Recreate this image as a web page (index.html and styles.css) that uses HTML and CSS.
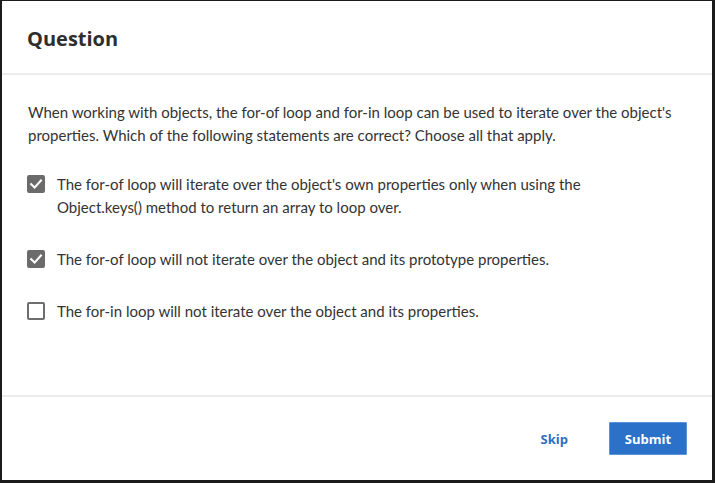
FILE: index.html
```html
<!DOCTYPE html>
<html>
<head>
<meta charset="utf-8">
<link rel="stylesheet" href="styles.css">
</head>
<body>
<div class="screen">
  <div class="dialog">
    <div class="header"><h1 class="title">Question</h1></div>
    <div class="body">
      <p class="prompt">When working with objects, the for-of loop and for-in loop can be used to iterate over the object's properties. Which of the following statements are correct? Choose all that apply.</p>
      <div class="options">
        <label class="option">
          <span class="box checked"><svg viewBox="0 0 18 18" width="18" height="18"><path d="M4.2 9.3 L7.6 12.6 L13.9 5.6" fill="none" stroke="#fff" stroke-width="2.1" stroke-linecap="square"/></svg></span>
          <span class="text">The for-of loop will iterate over the object's own properties only when using the Object.keys() method to return an array to loop over.</span>
        </label>
        <label class="option">
          <span class="box checked"><svg viewBox="0 0 18 18" width="18" height="18"><path d="M4.2 9.3 L7.6 12.6 L13.9 5.6" fill="none" stroke="#fff" stroke-width="2.1" stroke-linecap="square"/></svg></span>
          <span class="text">The for-of loop will not iterate over the object and its prototype properties.</span>
        </label>
        <label class="option">
          <span class="box"></span>
          <span class="text">The for-in loop will not iterate over the object and its properties.</span>
        </label>
      </div>
    </div>
    <div class="footer">
      <button class="skip">Skip</button>
      <button class="submit">Submit</button>
    </div>
  </div>
</div>
</body>
</html>
```
FILE: styles.css
```css
html, body {
  margin: 0;
  padding: 0;
  height: 100%;
}
body {
  background: #1b1b1b;
  font-family: "Lato", "Open Sans", sans-serif;
  color: #333;
}
.screen {
  height: 100vh;
  box-sizing: border-box;
  padding: 1px 3px 3px 2px;
  display: flex;
}
.dialog {
  flex: 1;
  background: #fff;
  display: flex;
  flex-direction: column;
}
.header {
  height: 72px;
  border-bottom: 2px solid #ececec;
  display: flex;
  align-items: center;
  padding: 0 26px;
}
.title {
  margin: 0;
  font-family: "Open Sans", sans-serif;
  font-weight: 700;
  font-size: 20px;
  color: #2e2e2e;
  padding-top: 2px;
  margin-left: -1px;
}
.body {
  flex: 1;
  padding: 26px 26px 0 26px;
  border-bottom: 2px solid #ececec;
}
.prompt {
  margin: 0 0 26px 0;
  font-size: 15px;
  line-height: 23px;
}
.options {
  display: flex;
  flex-direction: column;
  gap: 29px;
}
.option {
  display: flex;
  align-items: flex-start;
  gap: 12px;
  font-size: 15px;
  line-height: 23px;
  margin-left: -1px;
}
.text {
  max-width: 590px;
}
.box {
  flex: none;
  width: 18px;
  height: 18px;
  margin-top: 2px;
  box-sizing: border-box;
  border: 2px solid #6e6e6e;
  border-radius: 2px;
  background: #fff;
  position: relative;
}
.box.checked {
  background: #6b6b6b;
  border-color: #6b6b6b;
}
.box svg {
  position: absolute;
  left: -2px;
  top: -2px;
}
.footer {
  height: 83px;
  box-sizing: border-box;
  padding: 25px 25px 25px 26px;
  display: flex;
  justify-content: flex-end;
  align-items: center;
  gap: 25px;
}
button {
  font-family: "Open Sans", sans-serif;
  font-weight: 700;
  font-size: 13px;
  cursor: pointer;
}
.skip {
  background: none;
  border: none;
  color: #2f6fc2;
  padding: 0 16px;
  height: 33px;
}
.submit {
  width: 78px;
  height: 33px;
  background: #2b71c9;
  color: #fff;
  border: 1px solid #5b93d8;
  border-radius: 1px;
}
```
